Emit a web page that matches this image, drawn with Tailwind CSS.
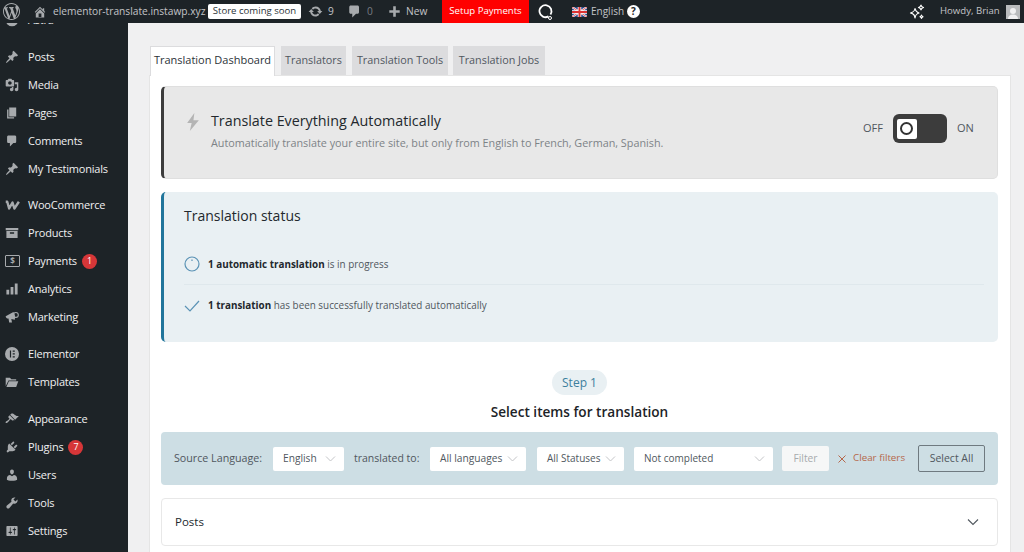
<!DOCTYPE html>
<html lang="en">
<head>
    <meta charset="UTF-8">
    <meta name="viewport" content="width=device-width, initial-scale=1.0">
    <script src="https://cdn.jsdelivr.net/npm/@tailwindcss/browser@4"></script>
    <title>Translation Dashboard</title>
</head>
<body class="h-[552px] w-[1024px] overflow-hidden bg-[#f0f0f1] font-['Open_Sans',sans-serif]">

<!-- admin bar -->
<div class="relative z-10 flex h-[23px] items-center bg-[#1d2327] text-[10.2px] text-[#c3c4c7]">
    <svg class="ml-[3px] h-[17px] w-[17px] shrink-0 fill-[#a7aaad]" viewBox="0 0 20 20"><path d="M20 10c0-5.51-4.49-10-10-10C4.48 0 0 4.49 0 10c0 5.52 4.48 10 10 10 5.51 0 10-4.48 10-10zM7.78 15.37L4.37 6.22c.55-.02 1.17-.08 1.17-.08.5-.06.44-1.13-.06-1.11 0 0-1.45.11-2.37.11-.18 0-.37 0-.58-.01C4.12 2.69 6.87 1.11 10 1.11c2.33 0 4.45.87 6.05 2.34-.68-.11-1.65.39-1.65 1.58 0 .74.45 1.36.9 2.1.35.61.55 1.36.55 2.46 0 1.49-1.4 5-1.4 5l-3.03-8.37c.54-.02.82-.17.82-.17.5-.05.44-1.25-.06-1.22 0 0-1.44.12-2.38.12-.87 0-2.33-.12-2.33-.12-.5-.03-.56 1.2-.06 1.22l.92.08 1.26 3.41zM17.41 10c.24-.64.74-1.87.43-4.25.7 1.29 1.05 2.71 1.05 4.25 0 3.29-1.73 6.24-4.4 7.78.97-2.59 1.94-5.2 2.92-7.78zM6.1 18.09C3.12 16.65 1.11 13.53 1.11 10c0-1.3.23-2.48.72-3.59C3.25 10.3 4.67 14.2 6.1 18.09zm4.03-6.63l2.58 6.98c-.86.29-1.76.45-2.71.45-.79 0-1.57-.11-2.29-.33.81-2.38 1.62-4.74 2.42-7.1z"/></svg>
    <svg class="ml-[13px] h-[14px] w-[14px] shrink-0 fill-[#a7aaad]" viewBox="0 0 20 20"><path d="M16 8.5l1.53 1.53-1.06 1.06L10 4.62l-6.47 6.47-1.06-1.06L10 2.5l4 4v-2h2v4zm-6-2.46l6 5.99V18H4v-5.97zM12 17v-5H8v5h4z"/></svg>
    <span class="ml-[6px] w-[148px] shrink-0 whitespace-nowrap">elementor-translate.instawp.xyz</span>
    <span class="ml-[7px] flex h-[15px] w-[93px] shrink-0 items-center justify-center whitespace-nowrap rounded-[2px] bg-white text-[9.6px] text-[#2c3338]">Store coming soon</span>
    <svg class="ml-[7px] h-[15px] w-[15px] shrink-0 fill-[#a7aaad]" viewBox="0 0 20 20"><path d="M10.2 3.28c3.53 0 6.43 2.61 6.92 6h2.08l-3.5 4-3.5-4h2.32c-.45-1.97-2.21-3.44-4.32-3.44-1.45 0-2.73.71-3.54 1.78L4.95 5.66C6.23 4.2 8.11 3.28 10.2 3.28zm-.4 13.44c-3.52 0-6.43-2.61-6.92-6H.8l3.5-4c1.17 1.33 2.33 2.67 3.5 4H5.48c.45 1.97 2.21 3.44 4.32 3.44 1.45 0 2.73-.71 3.54-1.78l1.71 1.95c-1.28 1.46-3.15 2.39-5.25 2.39z"/></svg>
    <span class="ml-[5px] w-[7px] shrink-0">9</span>
    <svg class="ml-[12px] h-[15px] w-[15px] shrink-0 fill-[#a7aaad]" viewBox="0 0 20 20"><path d="M5 2h9c1.1 0 2 .9 2 2v7c0 1.1-.9 2-2 2h-2l-5 5v-5H5c-1.1 0-2-.9-2-2V4c0-1.1.9-2 2-2z"/></svg>
    <span class="ml-[5px] w-[7px] shrink-0 text-[#787c82]">0</span>
    <svg class="ml-[14px] h-[13px] w-[13px] shrink-0 fill-[#a7aaad]" viewBox="0 0 20 20"><path d="M8 2h4v6h6v4h-6v6H8v-6H2V8h6z"/></svg>
    <span class="ml-[5px] w-[28px] shrink-0">New</span>
    <span class="ml-[8px] flex h-[23px] w-[87px] shrink-0 items-center justify-center whitespace-nowrap bg-[#ff0000] text-[9.6px] text-white">Setup Payments</span>
    <svg class="ml-[9px] h-[18px] w-[16px] shrink-0" viewBox="0 0 16 18"><path d="M10.5 13.4A6 6 0 1 1 12.500 11.500" fill="none" stroke="#fff" stroke-width="1.800"/><circle cx="12" cy="15" r="1.500" fill="none" stroke="#fff" stroke-width="1"/></svg>
    <svg class="ml-[18px] h-[10px] w-[15px] shrink-0" viewBox="0 0 30 20"><rect width="30" height="20" fill="#2b4a8c"/><path d="M0 0L30 20M30 0L0 20" stroke="#fff" stroke-width="4"/><path d="M0 0L30 20M30 0L0 20" stroke="#d33" stroke-width="1.600"/><path d="M15 0V20M0 10H30" stroke="#fff" stroke-width="7"/><path d="M15 0V20M0 10H30" stroke="#d33" stroke-width="4"/></svg>
    <span class="ml-[4px] w-[33px] shrink-0 text-[10px]">English</span>
    <span class="ml-[3px] flex h-[13px] w-[13px] shrink-0 items-center justify-center rounded-full bg-white text-[10px] font-bold text-[#1d2327]">?</span>
    <svg class="ml-[269px] h-[16px] w-[16px] shrink-0" viewBox="0 0 16 16" fill="none" stroke="#fff" stroke-width="1.200" stroke-linejoin="round"><path d="M6 4.500C6.500 7 7 8 10 9 7 10 6.500 11 6 14 5.500 11 5 10 1.500 9 5 8 5.500 7 6 4.500z"/><path d="M12 1C12.300 2.500 12.700 3 14.500 3.500 12.700 4 12.300 4.500 12 6 11.700 4.500 11.300 4 9.500 3.500 11.300 3 11.700 2.500 12 1z"/><path d="M12.500 11C12.700 12 13 12.300 14 12.700 13 13 12.700 13.500 12.500 14.500 12.300 13.500 12 13 11 12.700 12 12.300 12.300 12 12.500 11z"/></svg>
    <span class="ml-[15px] w-[62px] shrink-0 whitespace-nowrap text-[9.6px]">Howdy, Brian</span>
    <span class="ml-[4px] flex h-[14px] w-[14px] shrink-0 items-end justify-center overflow-hidden bg-[#b9bbbd]"><svg class="h-[12px] w-[12px] fill-[#f0f0f1]" viewBox="0 0 12 12"><circle cx="6" cy="4" r="3"/><path d="M1 12c0-3 2-4.500 5-4.500S11 9 11 12z"/></svg></span>
</div>

<div class="flex h-[529px]">
    <!-- sidebar -->
    <nav class="w-[128px] shrink-0 overflow-hidden bg-[#1d2327] text-[11px] tracking-[-0.2px] text-[#f0f0f1]">
        <div class="-mt-[17px]">
            <div class="flex h-[28px] items-center pl-[5px]">
                <svg class="mr-[9px] h-[14px] w-[14px] fill-[#a7aaad]" viewBox="0 0 20 20"><circle cx="10" cy="10" r="9"/></svg>Astra
            </div>
            <div class="h-[9px]"></div>
            <a class="flex h-[28px] items-center pl-[5px]"><svg class="mr-[9px] h-[14px] w-[14px] fill-[#a7aaad]" viewBox="0 0 20 20"><path d="M10.44 3.02l1.82-1.82 6.36 6.35-1.83 1.82c-1.05-.68-2.48-.57-3.41.36l-.75.75c-.92.93-1.04 2.35-.35 3.41l-1.83 1.82-2.41-2.41-2.8 2.79c-.42.42-3.38 2.71-3.8 2.29s1.86-3.39 2.28-3.81l2.79-2.79L4.1 9.36l1.83-1.82c1.05.69 2.48.57 3.4-.36l.75-.75c.93-.92 1.05-2.35.36-3.41z"/></svg>Posts</a>
            <a class="flex h-[28px] items-center pl-[5px]"><svg class="mr-[9px] h-[14px] w-[14px] fill-[#a7aaad]" viewBox="0 0 20 20"><path d="M13 11V4c0-.55-.45-1-1-1h-1.670L9 1H5L3.670 3H2c-.55 0-1 .45-1 1v7c0 .55.45 1 1 1h10c.55 0 1-.45 1-1zM7 4.500c1.380 0 2.500 1.120 2.500 2.500S8.380 9.500 7 9.500 4.500 8.380 4.500 7 5.620 4.500 7 4.500zM14 6h5v10.500c0 1.380-1.120 2.500-2.500 2.500S14 17.880 14 16.500s1.120-2.500 2.500-2.500c.17 0 .34.02.5.05V9h-3V6zm-4 8.050V13h2v3.500c0 1.380-1.120 2.500-2.500 2.500S7 17.880 7 16.500 8.120 14 9.500 14c.17 0 .34.02.5.05z"/></svg>Media</a>
            <a class="flex h-[28px] items-center pl-[5px]"><svg class="mr-[9px] h-[14px] w-[14px] fill-[#a7aaad]" viewBox="0 0 20 20"><path d="M6 15V2h10v13H6zm-1 1h8v2H3V5h2v11z"/></svg>Pages</a>
            <a class="flex h-[28px] items-center pl-[5px]"><svg class="mr-[9px] h-[14px] w-[14px] fill-[#a7aaad]" viewBox="0 0 20 20"><path d="M5 2h9c1.100 0 2 .9 2 2v7c0 1.100-.9 2-2 2h-2l-5 5v-5H5c-1.100 0-2-.9-2-2V4c0-1.100.9-2 2-2z"/></svg>Comments</a>
            <a class="flex h-[28px] items-center pl-[5px]"><svg class="mr-[9px] h-[14px] w-[14px] fill-[#a7aaad]" viewBox="0 0 20 20"><path d="M10.44 3.02l1.82-1.82 6.36 6.35-1.83 1.82c-1.05-.68-2.48-.57-3.41.36l-.75.75c-.92.93-1.04 2.35-.35 3.41l-1.83 1.82-2.41-2.41-2.8 2.79c-.42.42-3.38 2.71-3.8 2.29s1.86-3.39 2.28-3.81l2.79-2.79L4.1 9.36l1.83-1.82c1.05.69 2.48.57 3.4-.36l.75-.75c.93-.92 1.05-2.35.36-3.41z"/></svg>My Testimonials</a>
            <div class="h-[8px]"></div>
            <a class="flex h-[28px] items-center pl-[5px]"><svg class="mr-[8px] h-[11px] w-[15px]" viewBox="0 0 20 14" fill="none" stroke="#a7aaad" stroke-width="3.200" stroke-linejoin="round"><path d="M1 2h2l2.500 9L10 3l2.500 8L18.500 2"/></svg>WooCommerce</a>
            <a class="flex h-[28px] items-center pl-[5px]"><svg class="mr-[9px] h-[14px] w-[14px] fill-[#a7aaad]" viewBox="0 0 20 20"><path d="M1 3h18v3H1zM2 7h16v10H2zM7 9v2h6V9z" fill-rule="evenodd"/></svg>Products</a>
            <a class="flex h-[28px] items-center pl-[5px]"><span class="mr-[8px] flex h-[12px] w-[15px] items-center justify-center rounded-[1px] border border-[#a7aaad] text-[8px] font-bold leading-none text-[#a7aaad]">$</span>Payments<span class="ml-[5px] flex h-[15px] w-[15px] items-center justify-center rounded-full bg-[#d63638] text-[9px] text-white">1</span></a>
            <a class="flex h-[28px] items-center pl-[5px]"><svg class="mr-[9px] h-[14px] w-[14px] fill-[#a7aaad]" viewBox="0 0 20 20"><path d="M2 11h4v7H2zM8 7h4v11H8zM14 2h4v16h-4z"/></svg>Analytics</a>
            <a class="flex h-[28px] items-center pl-[5px]"><svg class="mr-[9px] h-[14px] w-[14px] fill-[#a7aaad]" viewBox="0 0 20 20"><path d="M1 9l11-6c2 2 3 7 2 11L9 13l1 5H6l-1-6H3c-1 0-2-2-2-3z"/><circle cx="15.500" cy="7" r="3.500" fill="none" stroke="#a7aaad" stroke-width="1.500"/></svg>Marketing</a>
            <div class="h-[9px]"></div>
            <a class="flex h-[28px] items-center pl-[5px]"><svg class="mr-[9px] h-[14px] w-[14px] fill-[#a7aaad]" viewBox="0 0 20 20"><path fill-rule="evenodd" d="M10 0a10 10 0 100 20 10 10 0 000-20zM7 5h1.700v10H7zm4 0h3v1.700h-3zm0 4.100h3v1.700h-3zm0 4.200h3V15h-3z"/></svg>Elementor</a>
            <a class="flex h-[28px] items-center pl-[5px]"><svg class="mr-[9px] h-[14px] w-[14px] fill-[#a7aaad]" viewBox="0 0 20 20"><path d="M1 4h6l2 2h7v2H5L1 16zM5.500 9H19l-3 8H2z"/></svg>Templates</a>
            <div class="h-[9px]"></div>
            <a class="flex h-[28px] items-center pl-[5px]"><svg class="mr-[9px] h-[14px] w-[14px] fill-[#a7aaad]" viewBox="0 0 20 20"><path d="M14.480 11.060L7.410 3.990l1.500-1.500c.5-.56 2.300-.47 3.510.32 1.210.8 1.430 1.280 2.910 2.100 1.180.64 2.450 1.260 4.450.85zm-.71.71L6.700 4.700 4.930 6.470c-.39.39-.39 1.020 0 1.410l1.060 1.060c.39.39.39 1.030 0 1.420-.6.6-1.430 1.110-2.210 1.690-.35.26-.7.53-1.010.84C1.430 13.230.4 14.950 1.100 15.660c.71.7 2.430-.33 3.770-1.670.31-.31.58-.66.84-1.010.58-.78 1.090-1.610 1.690-2.210.39-.39 1.030-.39 1.420 0l1.060 1.060c.39.39 1.020.39 1.410 0z"/></svg>Appearance</a>
            <a class="flex h-[28px] items-center pl-[5px]"><svg class="mr-[9px] h-[14px] w-[14px] fill-[#a7aaad]" viewBox="0 0 20 20"><path d="M13.110 4.360L9.870 7.600 8 5.730l3.240-3.240c.35-.34 1.050-.2 1.560.32.52.51.66 1.210.31 1.550zm-8 1.770l.91-1.120 9.010 9.010-1.190.84c-.71.71-2.630 1.160-3.820 1.160H6.140L4.900 17.260c-.59.59-1.540.59-2.120 0-.59-.58-.59-1.530 0-2.120l1.240-1.240v-3.880c0-1.130.4-3.190 1.090-3.890zm7.260 3.970l3.240-3.240c.34-.35 1.040-.21 1.550.31.52.51.66 1.210.31 1.550l-3.240 3.250z"/></svg>Plugins<span class="ml-[5px] flex h-[15px] w-[15px] items-center justify-center rounded-full bg-[#d63638] text-[9px] text-white">7</span></a>
            <a class="flex h-[28px] items-center pl-[5px]"><svg class="mr-[9px] h-[14px] w-[14px] fill-[#a7aaad]" viewBox="0 0 20 20"><path d="M10 9.250c-2.270 0-2.730-3.440-2.730-3.440C7 4.020 7.820 2 9.970 2c2.160 0 2.980 2.020 2.710 3.810 0 0-.41 3.440-2.680 3.440zm0 2.570L12.720 10c2.390 0 4.520 2.330 4.520 4.530v2.490s-3.650 1.130-7.240 1.130c-3.650 0-7.240-1.130-7.240-1.130v-2.490c0-2.250 1.940-4.480 4.470-4.480z"/></svg>Users</a>
            <a class="flex h-[28px] items-center pl-[5px]"><svg class="mr-[9px] h-[14px] w-[14px] fill-[#a7aaad]" viewBox="0 0 20 20"><path d="M16.680 9.770c-1.340 1.340-3.300 1.670-4.950.99l-5.410 6.520c-.99.99-2.590.99-3.580 0s-.99-2.590 0-3.570l6.520-5.420c-.68-1.650-.35-3.610.99-4.950 1.280-1.280 3.120-1.620 4.720-1.060l-2.890 2.890 2.820 2.820 2.860-2.870c.53 1.580.18 3.390-1.080 4.650z"/></svg>Tools</a>
            <a class="flex h-[28px] items-center pl-[5px]"><svg class="mr-[9px] h-[14px] w-[14px] fill-[#a7aaad]" viewBox="0 0 20 20"><path d="M18 16V4c0-.55-.45-1-1-1H3c-.55 0-1 .45-1 1v12c0 .55.45 1 1 1h14c.55 0 1-.45 1-1zM8 11h1c.55 0 1 .45 1 1s-.45 1-1 1H8v1.500c0 .28-.22.5-.5.5s-.5-.22-.5-.5V13H6c-.55 0-1-.45-1-1s.45-1 1-1h1V5.500c0-.28.22-.5.5-.5s.5.22.5.5V11zm5-2h-1c-.55 0-1-.45-1-1s.45-1 1-1h1V5.500c0-.28.22-.5.5-.5s.5.22.5.5V7h1c.55 0 1 .45 1 1s-.45 1-1 1h-1v5.500c0 .28-.22.5-.5.5s-.5-.22-.5-.5V9z"/></svg>Settings</a>
        </div>
    </nav>

    <!-- main -->
    <main class="w-[883px] pl-[21px] pt-[23px]">
        <div class="ml-px flex h-[29px] items-end text-[10.8px] text-[#50575e]">
            <div class="relative z-[1] -mb-px flex h-[30px] w-[125px] items-center justify-center border border-b-0 border-[#dcdcde] bg-white pb-[2px] text-[11px] text-[#2c3338]">Translation Dashboard</div>
            <div class="ml-[6px] flex h-[29px] w-[65px] items-center justify-center border border-b-0 border-[#dcdcde] bg-[#dcdcde] pb-px">Translators</div>
            <div class="ml-[6px] flex h-[29px] w-[96px] items-center justify-center border border-b-0 border-[#dcdcde] bg-[#dcdcde] pb-px">Translation Tools</div>
            <div class="ml-[5px] flex h-[29px] w-[92px] items-center justify-center border border-b-0 border-[#dcdcde] bg-[#dcdcde] pb-px">Translation Jobs</div>
        </div>

        <div class="h-[480px] border border-[#e5e5e5] bg-white pl-[11px] pr-[12px] pt-[10px]">
            <!-- auto translate -->
            <section class="flex h-[93px] items-start rounded-[5px] border border-l-[3px] border-[#dfdfdf] border-l-[#3c3c3c] bg-[#e8e8e8]">
                <svg class="ml-[22px] mt-[26px] h-[18px] w-[14px] fill-[#b4b4b4]" viewBox="0 0 15 20"><path d="M9 0L1 11h5l-2 9 10-12H8z"/></svg>
                <div class="ml-[11px] mt-[24px] w-[652px]">
                    <h2 class="text-[14.3px] font-medium leading-[20px] text-[#23282d]">Translate Everything Automatically</h2>
                    <p class="mt-[4px] text-[10.8px] leading-[16px] text-[#7d8387]">Automatically translate your entire site, but only from English to French, German, Spanish.</p>
                </div>
                <div class="mt-[27px] flex items-center">
                    <span class="text-[11px] text-[#50575e]">OFF</span>
                    <div class="ml-[10px] flex h-[29px] w-[54px] items-center rounded-[6px] bg-[#3c3c3c] pl-[4px]">
                        <span class="flex h-[20px] w-[20px] items-center justify-center rounded-[2px] bg-white"><span class="h-[13px] w-[13px] rounded-full border-2 border-[#333]"></span></span>
                    </div>
                    <span class="ml-[10px] text-[11px] text-[#50575e]">ON</span>
                </div>
            </section>

            <!-- translation status -->
            <section class="mt-[13px] h-[150px] rounded-[5px] border-l-[3px] border-[#21759b] bg-[#e9f0f3] pl-[20px] pr-[14px]">
                <h2 class="pt-[14px] text-[14px] font-medium leading-[20px] text-[#23282d]">Translation status</h2>
                <div class="mt-[24px] flex h-[35px] items-center border-b border-[#dfe8ec] pb-[6px] text-[9.9px] text-[#50575e]">
                    <svg class="h-[16px] w-[16px]" viewBox="0 0 16 16" fill="none" stroke="#5b93b5" stroke-width="1.200"><circle cx="8" cy="8" r="7"/><path d="M8 3.500V5"/></svg>
                    <span class="ml-[8px]"><b class="font-bold text-[#23282d]">1 automatic translation</b> is in progress</span>
                </div>
                <div class="mt-[3px] flex h-[35px] items-center text-[9.9px] text-[#50575e]">
                    <svg class="h-[12px] w-[16px]" viewBox="0 0 16 12" fill="none" stroke="#5b93b5" stroke-width="1.200"><path d="M1 6l5 5 9-10"/></svg>
                    <span class="ml-[8px]"><b class="font-bold text-[#23282d]">1 translation</b> has been successfully translated automatically</span>
                </div>
            </section>

            <!-- step -->
            <div class="mt-[28px] flex justify-center">
                <span class="flex h-[25px] w-[55px] items-center justify-center rounded-full bg-[#e9f0f3] text-[12px] text-[#3d7f9e]">Step 1</span>
            </div>
            <h3 class="mt-[7px] text-center text-[13.6px] font-semibold leading-[20px] text-[#1d2327]">Select items for translation</h3>

            <!-- filter bar -->
            <div class="mt-[10px] flex h-[53px] items-center rounded-[4px] bg-[#cddee4] pl-[13px] text-[10.2px] text-[#50575e]">
                <span class="w-[89px] whitespace-nowrap text-[10.7px]">Source Language:</span>
                <div class="ml-[10px] flex h-[24px] w-[71px] items-center justify-between rounded-[2px] bg-white pl-[10px] pr-[8px]">English<svg class="h-[6px] w-[11px]" viewBox="0 0 11 6" fill="none" stroke="#c3c4c7"><path d="M1 .5l4.500 4.500L10 .5"/></svg></div>
                <span class="ml-[10px] w-[66px] whitespace-nowrap text-[10.5px]">translated to:</span>
                <div class="ml-[10px] flex h-[24px] w-[96px] items-center justify-between rounded-[2px] bg-white pl-[10px] pr-[8px]">All languages<svg class="h-[6px] w-[11px]" viewBox="0 0 11 6" fill="none" stroke="#c3c4c7"><path d="M1 .5l4.500 4.500L10 .5"/></svg></div>
                <div class="ml-[11px] flex h-[24px] w-[87px] items-center justify-between rounded-[2px] bg-white pl-[10px] pr-[8px] text-[10px]">All Statuses<svg class="h-[6px] w-[11px]" viewBox="0 0 11 6" fill="none" stroke="#c3c4c7"><path d="M1 .5l4.500 4.500L10 .5"/></svg></div>
                <div class="ml-[10px] flex h-[24px] w-[139px] items-center justify-between rounded-[2px] bg-white pl-[10px] pr-[8px] text-[10px]">Not completed<svg class="h-[6px] w-[11px]" viewBox="0 0 11 6" fill="none" stroke="#c3c4c7"><path d="M1 .5l4.500 4.500L10 .5"/></svg></div>
                <div class="ml-[9px] flex h-[25px] w-[47px] items-center justify-center rounded-[2px] bg-[#f6f7f7] text-[#a7aaad]">Filter</div>
                <svg class="ml-[9px] h-[8px] w-[8px]" viewBox="0 0 8 8" fill="none" stroke="#b5674a"><path d="M.5.5l7 7M7.500.5l-7 7"/></svg>
                <span class="ml-[7px] w-[53px] whitespace-nowrap text-[9.8px] text-[#b5674a]">Clear filters</span>
                <div class="ml-[12px] flex h-[27px] w-[67px] items-center justify-center rounded-[2px] border border-[#6f7a80] text-[10.5px]">Select All</div>
            </div>

            <!-- posts -->
            <div class="mt-[13px] flex h-[48px] items-center justify-between rounded-[4px] border border-[#e8e8e8] pl-[13px] pr-[18px] text-[11.5px] font-medium text-[#23282d]">
                Posts
                <svg class="h-[7px] w-[12px]" viewBox="0 0 12 7" fill="none" stroke="#50575e" stroke-width="1.100"><path d="M1 .5l5 5 5-5"/></svg>
            </div>
        </div>
    </main>
</div>

</body>
</html>
